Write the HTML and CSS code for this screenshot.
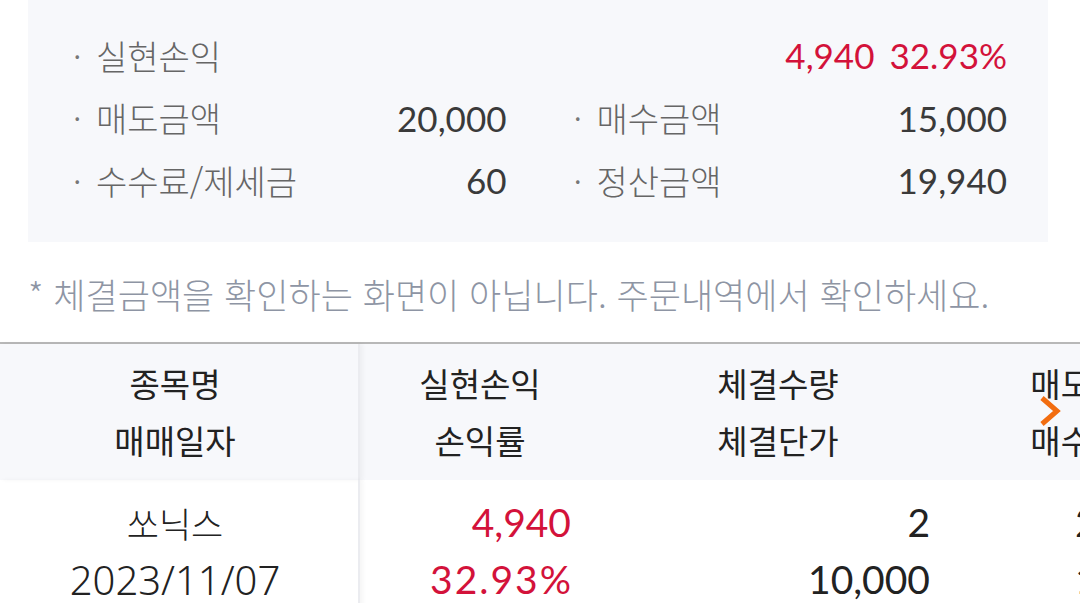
FILE: index.html
```html
<!DOCTYPE html>
<html lang="ko">
<head>
    <meta charset="UTF-8">
    <meta name="viewport" content="width=device-width, initial-scale=1.0">
    <title>실현손익</title>
    <link rel="stylesheet" href="styles.css">
</head>
<body>
    <div class="page">
        <!-- 요약 -->
        <div class="summary">
            <div class="row row-full">
                <span class="label">실현손익</span>
                <span class="vals">
                    <span class="num red">4,940</span>
                    <span class="num red">32.93%</span>
                </span>
            </div>
            <div class="row">
                <span class="label">매도금액</span>
                <span class="num">20,000</span>
            </div>
            <div class="row">
                <span class="label">매수금액</span>
                <span class="num">15,000</span>
            </div>
            <div class="row">
                <span class="label">수수료/제세금</span>
                <span class="num">60</span>
            </div>
            <div class="row">
                <span class="label">정산금액</span>
                <span class="num">19,940</span>
            </div>
        </div>

        <p class="note">* 체결금액을 확인하는 화면이 아닙니다. 주문내역에서 확인하세요.</p>

        <!-- 목록 -->
        <div class="list">
            <div class="list-head">
                <div class="cell c1"><span>종목명</span><span>매매일자</span></div>
                <div class="cell c2"><span>실현손익</span><span>손익률</span></div>
                <div class="cell c3"><span>체결수량</span><span>체결단가</span></div>
                <div class="cell c4"><span>매도금액</span><span>매수금액</span></div>
            </div>
            <div class="list-row">
                <div class="cell c1"><span class="name">쏘닉스</span><span class="date">2023/11/07</span></div>
                <div class="cell c2 right red"><span class="num">4,940</span><span class="num rate">32.93%</span></div>
                <div class="cell c3 right"><span class="num">2</span><span class="num">10,000</span></div>
                <div class="cell c4 right"><span class="num">20,000</span><span class="num">15,000</span></div>
            </div>
            <!-- 오른쪽 화살표 -->
            <div class="more">
                <svg width="22" height="30" viewBox="0 0 22 30">
                    <polyline points="3,2 18,15 3,28" fill="none" stroke="#f26d10" stroke-width="5"/>
                </svg>
            </div>
        </div>
    </div>
</body>
</html>
```

FILE: styles.css
```css
*{
    padding: 0;
    margin: 0;
    box-sizing: border-box;
}
html,body{
    width: 1080px;
    height: 603px;
    overflow: hidden;
    background: #fff;
}
body{
    font-family: "Noto Sans CJK KR", "Noto Sans", sans-serif;
    color: #222;
}
.num{
    font-family: Lato, "Noto Sans CJK KR", sans-serif;
}
.red{
    color: #d3123a;
}
/* 요약 박스 */
.summary{
    margin: 0 32px 0 28px;
    padding: 24px 41px 30px 45px;
    background: #f7f8fb;
    display: grid;
    grid-template-columns: 1fr 1fr;
    column-gap: 67px;
}
.row{
    display: flex;
    align-items: center;
    justify-content: space-between;
    height: 62.5px;
}
.row-full{
    grid-column: 1 / -1;
}
.label{
    font-size: 34px;
    font-weight: 300;
    color: #666;
}
.label::before{
    content: "·";
    display: inline-block;
    width: 23px;
    color: #777;
}
.row .num{
    font-size: 35px;
    color: #3a3a3a;
}
.row .red{
    color: #d3123a;
}
.vals{
    display: flex;
    gap: 15px;
}
.note{
    padding: 26px 0 0 28px;
    height: 100px;
    font-size: 35px;
    font-weight: 300;
    color: #8e95a4;
}
/* 목록 */
.list{
    position: relative;
    border-top: 2px solid #b8b8b8;
}
.list-head,
.list-row{
    display: flex;
}
.list-head{
    background: #f7f8fb;
    font-size: 33px;
}
.list-head .cell{
    height: 136px;
    padding-top: 11px;
}
.list-row .cell{
    padding-top: 14px;
}
.cell{
    display: flex;
    flex-direction: column;
    align-items: center;
    line-height: 57px;
    flex-shrink: 0;
}
.c1{
    width: 360px;
    padding-right: 8px;
    border-right: 2px solid #ebecf0;
    box-shadow: 3px 0 4px rgba(0,0,0,0.04);
}
.c2{
    width: 240px;
}
.c3{
    width: 356px;
}
.c4{
    width: 270px;
}
.right{
    align-items: flex-end;
    padding-right: 29px;
}
.c3.right{
    padding-right: 26px;
}
.list-row .num{
    font-size: 39px;
}
.list-row .rate{
    letter-spacing: 2px;
    margin-right: -2px;
}
.list-row .name{
    font-size: 35px;
    font-weight: 300;
}
.list-row .date{
    font-family: "Noto Sans", sans-serif;
    font-size: 40px;
    font-weight: 300;
}
.more{
    position: absolute;
    left: 1039px;
    top: 52px;
}
```
